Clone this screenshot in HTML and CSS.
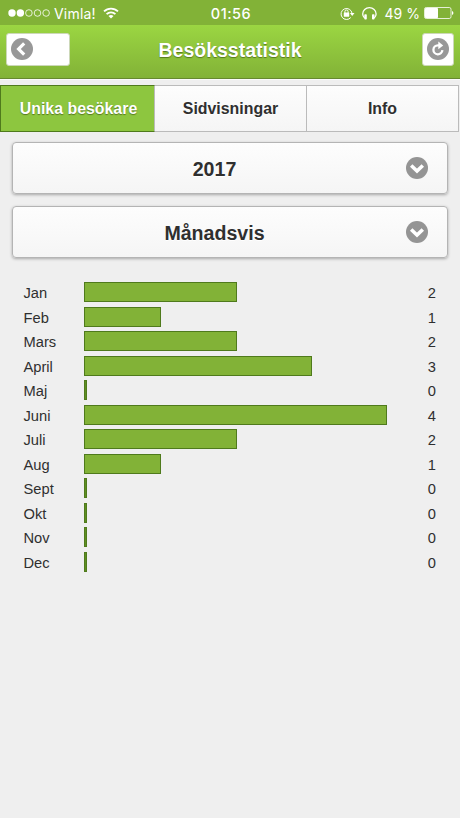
FILE: index.html
```html
<!DOCTYPE html>
<html lang="sv">
<head>
  <meta charset="UTF-8">
  <meta name="viewport" content="width=device-width, initial-scale=1.0">
  <title>Besöksstatistik</title>
  <link rel="stylesheet" href="styles.css">
</head>
<body>
  <div class="status-bar">
    <div class="status-left">
      <svg class="signal" width="42" height="10" viewBox="0 0 42 10">
        <circle cx="4" cy="5" r="3.7" fill="#fff"/>
        <circle cx="12.4" cy="5" r="3.7" fill="#fff"/>
        <g fill="none" stroke="#fff" stroke-width=".8">
          <circle cx="20.9" cy="5" r="3.3"/>
          <circle cx="29.5" cy="5" r="3.3"/>
          <circle cx="38.1" cy="5" r="3.3"/>
        </g>
      </svg>
      <span class="carrier">Vimla!</span>
      <svg class="wifi" width="16" height="12" viewBox="0 0 16 12">
        <g fill="none" stroke="#fff" stroke-width="1.8">
          <path d="M1 4.4a10 10 0 0 1 14 0"/>
          <path d="M3.6 7.1a6.3 6.3 0 0 1 8.8 0"/>
        </g>
        <path d="M8 11.6L5.5 9.1a3.6 3.6 0 0 1 5 0z" fill="#fff"/>
      </svg>
    </div>
    <div class="clock">01:56</div>
    <div class="status-right">
      <svg class="lock" width="15" height="13" viewBox="0 0 15 13">
        <path d="M10.8 10.5a5.5 5.5 0 1 1 1.2-4.3" fill="none" stroke="#fff"/>
        <path d="M9.9 6h4.6l-2.3 2.9z" fill="#fff"/>
        <rect x="3.8" y="5.6" width="5.4" height="4.1" rx=".5" fill="#fff"/>
        <path d="M4.9 6V4.6a1.6 1.6 0 0 1 3.2 0V6" fill="none" stroke="#fff"/>
      </svg>
      <svg class="headphones" width="15" height="13" viewBox="0 0 15 13">
        <path d="M2.6 11C.9 9.5.7 8.1.7 7a6.7 6.3 0 0 1 13.4 0c0 1.1-.2 2.5-1.9 4" fill="none" stroke="#fff" stroke-width="1.3"/>
        <rect x="2.3" y="7.3" width="2.5" height="5.2" rx=".8" fill="#fff"/>
        <rect x="10" y="7.3" width="2.5" height="5.2" rx=".8" fill="#fff"/>
      </svg>
      <span class="percent">49 %</span>
      <svg class="battery" width="30" height="12" viewBox="0 0 30 12">
        <rect x=".5" y=".5" width="26.5" height="11" rx="1.7" fill="none" stroke="#fff" stroke-width=".8"/>
        <rect x="1" y="1" width="13" height="10" rx=".8" fill="#fff"/>
        <path d="M28 4v4c1.9-.8 1.9-3.2 0-4z" fill="#fff"/>
      </svg>
    </div>
  </div>

  <header class="header">
    <a class="btn btn-back">
      <svg width="22" height="22" viewBox="0 0 22 22">
        <circle cx="11" cy="11" r="11" fill="#989898"/>
        <path d="M13.2 5.3L7.6 11l5.6 5.7" fill="none" stroke="#fff" stroke-width="3.2"/>
      </svg>
    </a>
    <h1>Besöksstatistik</h1>
    <a class="btn btn-refresh">
      <svg width="22" height="22" viewBox="0 0 22 22">
        <circle cx="11" cy="11" r="11" fill="#989898"/>
        <path d="M15.4 12.2a4.5 4.5 0 1 1-4.5-4.9h1.5" fill="none" stroke="#fff" stroke-width="2.3"/>
        <path d="M11.3 3.6l4.9 3.8-4.9 3.8z" fill="#fff"/>
      </svg>
    </a>
  </header>

  <nav class="tabs">
    <a class="tab active">Unika besökare</a>
    <a class="tab">Sidvisningar</a>
    <a class="tab">Info</a>
  </nav>

  <main class="content">
    <div class="select">
      <span>2017</span>
      <svg class="arrow" width="22" height="22" viewBox="0 0 22 22">
        <circle cx="11" cy="11" r="11" fill="#949494"/>
        <path d="M5.2 8.4L11 14l5.8-5.6" fill="none" stroke="#fff" stroke-width="3.5"/>
      </svg>
    </div>
    <div class="select">
      <span>Månadsvis</span>
      <svg class="arrow" width="22" height="22" viewBox="0 0 22 22">
        <circle cx="11" cy="11" r="11" fill="#949494"/>
        <path d="M5.2 8.4L11 14l5.8-5.6" fill="none" stroke="#fff" stroke-width="3.5"/>
      </svg>
    </div>

    <div class="chart">
      <div class="row"><span class="month">Jan</span><div class="track"><div class="bar" style="width: 50.5%"></div></div><span class="value">2</span></div>
      <div class="row"><span class="month">Feb</span><div class="track"><div class="bar" style="width: 25.5%"></div></div><span class="value">1</span></div>
      <div class="row"><span class="month">Mars</span><div class="track"><div class="bar" style="width: 50.5%"></div></div><span class="value">2</span></div>
      <div class="row"><span class="month">April</span><div class="track"><div class="bar" style="width: 75.3%"></div></div><span class="value">3</span></div>
      <div class="row"><span class="month">Maj</span><div class="track"><div class="bar empty"></div></div><span class="value">0</span></div>
      <div class="row"><span class="month">Juni</span><div class="track"><div class="bar" style="width: 100%"></div></div><span class="value">4</span></div>
      <div class="row"><span class="month">Juli</span><div class="track"><div class="bar" style="width: 50.5%"></div></div><span class="value">2</span></div>
      <div class="row"><span class="month">Aug</span><div class="track"><div class="bar" style="width: 25.5%"></div></div><span class="value">1</span></div>
      <div class="row"><span class="month">Sept</span><div class="track"><div class="bar empty"></div></div><span class="value">0</span></div>
      <div class="row"><span class="month">Okt</span><div class="track"><div class="bar empty"></div></div><span class="value">0</span></div>
      <div class="row"><span class="month">Nov</span><div class="track"><div class="bar empty"></div></div><span class="value">0</span></div>
      <div class="row"><span class="month">Dec</span><div class="track"><div class="bar empty"></div></div><span class="value">0</span></div>
    </div>
  </main>
</body>
</html>
```
FILE: styles.css
```css
:root {
  --green: #82b237;
  --green-active: #8dc63f;
  --green-dark: #4f7a1c;
  --page-bg: #efefef;
  --text: #2f2f2f;
  --border: #bbb;
}
* {
  box-sizing: border-box;
}
body {
  margin: 0;
  min-height: 100vh;
  background-color: var(--page-bg);
  color: var(--text);
  font-family: "Liberation Sans", Arial, sans-serif;
}
svg {
  display: block;
  flex: none;
}

/* status bar */
.status-bar {
  display: flex;
  align-items: center;
  height: 25px;
  padding: 1px 6px 0 8px;
  background-color: var(--green);
  color: #fff;
  font-family: Inter, Roboto, sans-serif;
  font-size: 14px;
}
.status-left,
.status-right {
  display: flex;
  flex: 1;
  align-items: center;
}
.status-right {
  justify-content: flex-end;
}
.carrier {
  margin: 0 7px 0 4px;
  letter-spacing: 0.2px;
}
.clock {
  font-weight: 500;
  font-size: 14.5px;
  letter-spacing: 0.5px;
}
.headphones {
  margin: 0 8px 0 7px;
}
.percent {
  margin-right: 4px;
}

/* header */
.header {
  display: flex;
  align-items: center;
  justify-content: space-between;
  height: 54px;
  padding: 0 6px 5px;
  background-image: linear-gradient(#9bd642, #82b237);
  border-bottom: 1px solid #66892f;
  box-shadow: 0 1px 0 #fafafa;
}
.header h1 {
  flex: 1;
  margin: 0;
  padding: 2px 0 0;
  color: #fff;
  font-size: 19.5px;
  text-align: center;
  text-shadow: 0 1px 1px #55781f;
}
.btn {
  display: flex;
  align-items: center;
  height: 33px;
  background-color: #fff;
  border: 1px solid #ccd8b8;
  border-radius: 3px;
}
.btn-back {
  width: 64px;
  padding-left: 4px;
  margin-right: -32px;
}
.btn-refresh {
  justify-content: center;
  width: 32px;
}

/* tabs */
.tabs {
  display: flex;
  width: 459px;
  height: 47px;
  margin-top: 6px;
}
.tab {
  display: flex;
  flex: 1;
  align-items: center;
  justify-content: center;
  padding-top: 1px;
  background-image: linear-gradient(#fdfdfd, #f5f5f5);
  border: 1px solid var(--border);
  border-left-width: 0;
  font-size: 15.9px;
  font-weight: bold;
  text-shadow: 0 1px 0 #fff;
}
.tab.active {
  padding-left: 2px;
  background: var(--green-active);
  border: 1px solid var(--green-dark);
  border-right-color: var(--border);
  color: #fff;
  text-shadow: 0 1px 1px #55781f;
}

/* content */
.content {
  padding: 10px 12px 0;
}
.select {
  display: flex;
  align-items: center;
  height: 52px;
  margin-bottom: 12px;
  padding: 0 19px 0 0;
  background-image: linear-gradient(#fdfdfd, #f5f5f5);
  border: 1px solid #b4b4b4;
  border-radius: 4px;
  box-shadow: 0 1px 3px rgba(0, 0, 0, 0.3);
  font-size: 19.6px;
  font-weight: bold;
  text-shadow: 0 1px 0 #fff;
}
.select span {
  flex: 1;
  padding: 3px 0 0 10px;
  text-align: center;
}

/* chart */
.chart {
  padding: 12px 12px 0 11.5px;
}
.row {
  display: flex;
  height: 24.5px;
  font-size: 14.7px;
}
.month {
  width: 60.5px;
  line-height: 22px;
}
.track {
  width: 303px;
}
.bar {
  height: 20px;
  background-color: var(--green);
  border: 1px solid var(--green-dark);
}
.bar.empty {
  width: 3px;
  background-color: #5f8f22;
}
.value {
  flex: 1;
  line-height: 22px;
  text-align: right;
}
```
